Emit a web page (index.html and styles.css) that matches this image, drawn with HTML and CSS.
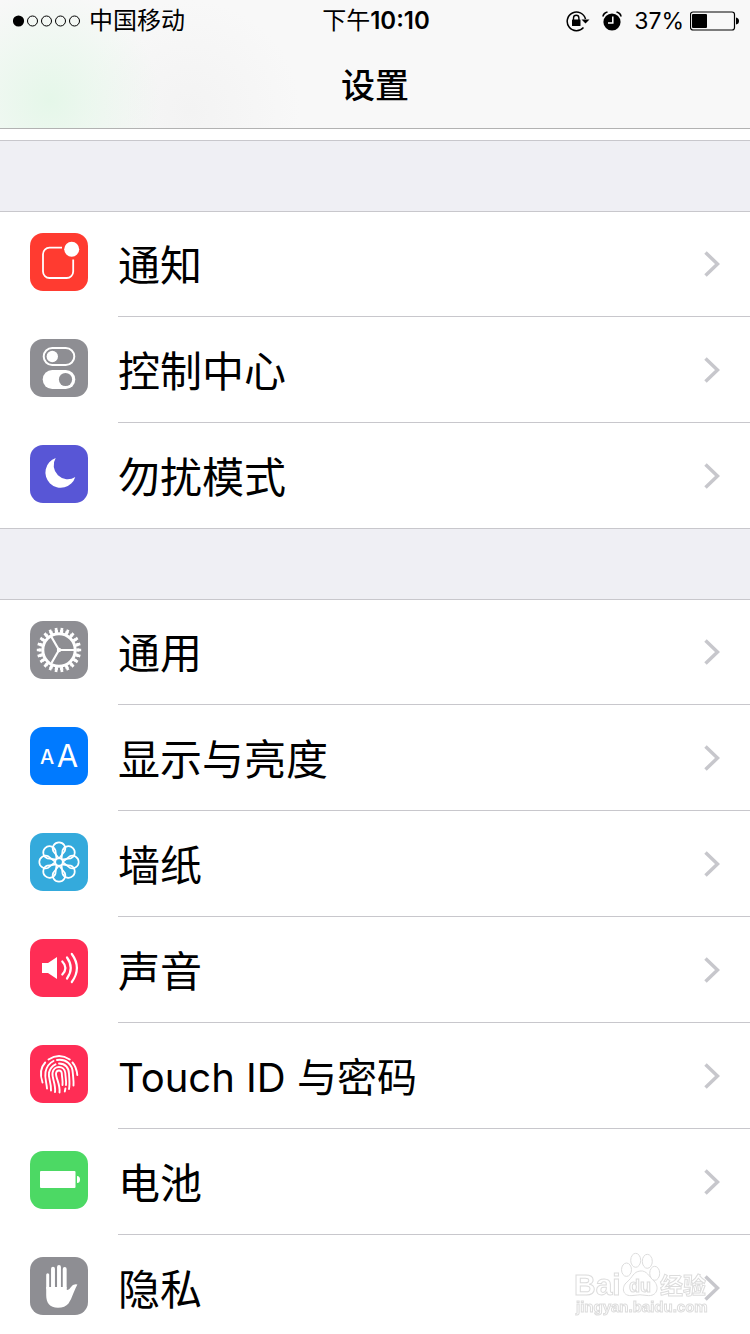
FILE: index.html
```html
<!DOCTYPE html>
<html lang="zh-CN">
<head>
  <meta charset="UTF-8">
  <meta name="viewport" content="width=device-width, initial-scale=1.0">
  <title>设置</title>
  <link rel="stylesheet" href="styles.css">
</head>
<body>

<svg class="defs" width="0" height="0" aria-hidden="true">
  <symbol id="chevron" viewBox="0 0 16 26">
    <path d="M1.500 1.500L13.500 13L1.500 24.500" fill="none" stroke="#c7c7cc" stroke-width="3.500"/>
  </symbol>
  <symbol id="petal" viewBox="0 0 58 58">
    <path d="M29 25.500L23.300 18.300A6.300 6.300 0 1 1 34.700 18.300Z" fill="none" stroke="#fff" stroke-width="1.700" stroke-linejoin="round"/>
  </symbol>
</svg>

<header class="header">
  <!-- Status bar -->
  <div class="status">
    <div class="status-left">
      <svg width="68" height="12" viewBox="0 0 68 12">
        <circle cx="5.500" cy="6" r="5.600"/>
        <g fill="none" stroke="#000">
          <circle cx="19.500" cy="6" r="5"/>
          <circle cx="33.500" cy="6" r="5"/>
          <circle cx="47.500" cy="6" r="5"/>
          <circle cx="61.500" cy="6" r="5"/>
        </g>
      </svg>
      <span>中国移动</span>
    </div>
    <div class="status-time">下午<b>10:10</b></div>
    <div class="status-right">
      <svg width="24" height="22" viewBox="0 0 24 22">
        <path d="M17.500 17.500A9.300 9.300 0 1 1 19.500 9" fill="none" stroke="#000" stroke-width="1.500"/>
        <path d="M15.500 9.500H23.500L19.500 13.500Z"/>
        <rect x="6" y="9.500" width="8.500" height="6.500" rx=".5"/>
        <path d="M7.500 10V8a2.700 2.700 0 0 1 5.400 0V10" fill="none" stroke="#000" stroke-width="1.400"/>
      </svg>
      <svg width="20" height="20" viewBox="0 0 20 20">
        <circle cx="10" cy="11" r="8.600"/>
        <path d="M1 5.500Q1.500 2 5.500 1M19 5.500Q18.500 2 14.500 1" fill="none" stroke="#000" stroke-width="1.700"/>
        <path d="M10.800 5.500V12H6" fill="none" stroke="#fff" stroke-width="1.500"/>
      </svg>
      <span class="percent">37%</span>
      <svg width="49" height="20" viewBox="0 0 49 20">
        <rect x=".5" y="1" width="44" height="18" rx="2.500" fill="none" stroke="#000" stroke-width="1.200"/>
        <rect x="2" y="3" width="15" height="14" rx="1"/>
        <path d="M46 6.500Q49 7 49 10T46 13.500Z"/>
      </svg>
    </div>
  </div>
  <h1>设置</h1>
</header>

<main class="list">

  <nav class="group">
    <a class="row" href="#">
      <svg class="icon red" viewBox="0 0 58 58">
        <path d="M32 14.700H19.500a6.500 6.500 0 0 0-6.500 6.500V38.500a6.500 6.500 0 0 0 6.500 6.500H36.700a6.500 6.500 0 0 0 6.500-6.500V26.500" fill="none" stroke="#fff" stroke-width="1.800"/>
        <circle cx="41.700" cy="16.300" r="7.500" fill="#fff"/>
      </svg>
      <span class="label">通知</span>
      <svg class="chevron"><use href="#chevron"/></svg>
    </a>
    <a class="row" href="#">
      <svg class="icon gray" viewBox="0 0 58 58">
        <rect x="13.700" y="9" width="30.600" height="17" rx="8.500" fill="none" stroke="#fff" stroke-width="2"/>
        <circle cx="22.300" cy="17.500" r="5.700" fill="#fff"/>
        <rect x="12.700" y="31" width="32.600" height="19" rx="9.500" fill="#fff"/>
        <circle cx="35.500" cy="40.500" r="6.600" fill="#8e8e93"/>
      </svg>
      <span class="label">控制中心</span>
      <svg class="chevron"><use href="#chevron"/></svg>
    </a>
    <a class="row" href="#">
      <svg class="icon purple" viewBox="0 0 58 58">
        <path d="M25.700 13A15.300 15.300 0 1 0 45.300 32A14 14 0 0 1 25.700 13Z" fill="#fff"/>
      </svg>
      <span class="label">勿扰模式</span>
      <svg class="chevron"><use href="#chevron"/></svg>
    </a>
  </nav>

  <nav class="group">
    <a class="row" href="#">
      <svg class="icon gray" viewBox="0 0 58 58">
        <g fill="none" stroke="#fff">
          <circle cx="29" cy="29" r="16.200" stroke-width="3"/>
          <circle cx="29" cy="29" r="18.800" stroke-width="3" pathLength="44" stroke-dasharray="1.200 .8" stroke-dashoffset=".6"/>
          <circle cx="29" cy="29" r="21" stroke-width="2.400" pathLength="44" stroke-dasharray=".9 1.100" stroke-dashoffset=".45"/>
          <path d="M29 29H44M29 29L21.500 16M29 29L21.500 42" stroke-width="2.200"/>
        </g>
        <circle cx="29" cy="29" r="2.200" fill="#fff"/>
      </svg>
      <span class="label">通用</span>
      <svg class="chevron"><use href="#chevron"/></svg>
    </a>
    <a class="row" href="#">
      <svg class="icon blue" viewBox="0 0 58 58">
        <text class="small-a" x="17" y="37" text-anchor="middle">A</text>
        <text class="big-a" x="37.500" y="40" text-anchor="middle">A</text>
      </svg>
      <span class="label">显示与亮度</span>
      <svg class="chevron"><use href="#chevron"/></svg>
    </a>
    <a class="row" href="#">
      <svg class="icon cyan" viewBox="0 0 58 58">
        <use href="#petal"/>
        <use href="#petal" transform="rotate(45 29 29)"/>
        <use href="#petal" transform="rotate(90 29 29)"/>
        <use href="#petal" transform="rotate(135 29 29)"/>
        <use href="#petal" transform="rotate(180 29 29)"/>
        <use href="#petal" transform="rotate(225 29 29)"/>
        <use href="#petal" transform="rotate(270 29 29)"/>
        <use href="#petal" transform="rotate(315 29 29)"/>
        <circle cx="29" cy="29" r="3.800" fill="none" stroke="#fff" stroke-width="1.500"/>
      </svg>
      <span class="label">墙纸</span>
      <svg class="chevron"><use href="#chevron"/></svg>
    </a>
    <a class="row" href="#">
      <svg class="icon pink" viewBox="0 0 58 58">
        <path d="M12 24H18L27 18V40L18 34H12Z" fill="#fff"/>
        <path d="M32.300 22.500Q38.500 29 32.300 35.500M37 18.500Q44.500 29 37 39.500M41.800 15Q52 29 41.800 43" fill="none" stroke="#fff" stroke-width="2.200" stroke-linecap="round"/>
      </svg>
      <span class="label">声音</span>
      <svg class="chevron"><use href="#chevron"/></svg>
    </a>
    <a class="row" href="#">
      <svg class="icon pink" viewBox="0 0 58 58">
        <g fill="none" stroke="#fff" stroke-width="1.900" stroke-linecap="round">
          <path d="M18.500 14.500Q29 7.500 39.800 14.500"/>
          <path d="M15.200 17.500C10 23 10 30 12.500 37.500"/>
          <path d="M42.500 17.500Q46.500 22 47.300 30"/>
          <path d="M17 43.500C16.500 37 14.500 33 15.500 27C16.500 22 19.500 18 23.500 16"/>
          <path d="M27 15C36 13.500 42.500 19.500 42.800 28C43.200 33 43.800 36 43.500 40.500"/>
          <path d="M21 45.500C21.500 38 18 33 19 27.500Q20.500 21.500 25.500 19.300"/>
          <path d="M29 18.500C35.500 18.500 39 23 39 29C39.300 35 40 39 39 44"/>
          <path d="M25 47C26 39 21.800 33 22.500 28C23.500 20 34.500 20 35.300 28C35.500 33 36.500 36 36 40"/>
          <path d="M35.400 43.500L34.800 46.500"/>
          <path d="M29.500 47.500C30.500 40 25.800 33 26 28.500C26.500 24.500 31.500 24.500 31.800 28.500C32 33 33 36 32.500 40"/>
        </g>
      </svg>
      <span class="label label-mixed">Touch ID 与密码</span>
      <svg class="chevron"><use href="#chevron"/></svg>
    </a>
    <a class="row" href="#">
      <svg class="icon green" viewBox="0 0 58 58">
        <rect x="10" y="20" width="35.500" height="17" rx="1" fill="#fff"/>
        <path d="M47 25Q50 25 50 28.500T47 32Z" fill="#fff"/>
      </svg>
      <span class="label">电池</span>
      <svg class="chevron"><use href="#chevron"/></svg>
    </a>
    <a class="row" href="#">
      <svg class="icon gray" viewBox="0 0 58 58">
        <path d="M17.700 31V17.700" stroke="#fff" stroke-width="3" stroke-linecap="round"/>
        <path d="M23 31V11.700M29 31V10M34.700 31V12" stroke="#fff" stroke-width="3.900" stroke-linecap="round"/>
        <path d="M16.200 30H36.600V32.500Q38.500 34 41 30Q43 26.500 47.400 27.500Q45.500 31 43.500 36Q41 43 38.500 46.500Q35 50.700 28 50.700C19.500 50.700 16.200 46 16.200 38Z" fill="#fff"/>
      </svg>
      <span class="label">隐私</span>
      <svg class="chevron"><use href="#chevron"/></svg>
    </a>
  </nav>

</main>

<!-- Watermark -->
<svg class="watermark" viewBox="0 0 136 66">
  <text class="wm-name" x="0" y="43">Bai</text>
  <ellipse cx="52.500" cy="17.700" rx="5" ry="6.700"/>
  <ellipse cx="61.700" cy="8.300" rx="5" ry="7"/>
  <ellipse cx="73.300" cy="9.300" rx="5" ry="7"/>
  <ellipse cx="80.700" cy="21.300" rx="5" ry="7"/>
  <path d="M66 19C73 18 75 25 80 29C86 35 83 45 73 43.500Q66 42 59 43.500C48 45 47 35 53 30C59 25 59 20 66 19Z"/>
  <text class="wm-du" x="55" y="40">du</text>
  <text class="wm-cn" x="86" y="42">经验</text>
  <text class="wm-url" x="2" y="60">jingyan.baidu.com</text>
</svg>

</body>
</html>
```
FILE: styles.css
```css
* {
  box-sizing: border-box;
}

body {
  margin: 0;
  height: 100vh;
  display: flex;
  flex-direction: column;
  overflow: hidden;
  font-family: Inter, "Noto Sans CJK SC", sans-serif;
  color: #000;
  background: #efeff4;
}

.defs {
  position: absolute;
}

/* Header */
.header {
  flex: none;
  height: 129px;
  border-bottom: 1px solid #b2b2b2;
  background:
    radial-gradient(circle at 50px 100px, #e5f7e9 0, rgba(229, 247, 233, 0) 110px),
    radial-gradient(circle at 190px 110px, #f3f3f3 0, rgba(243, 243, 243, 0) 110px),
    #f8f8f8;
}

.status {
  display: grid;
  grid-template-columns: 1fr auto 1fr;
  align-items: center;
  height: 42px;
  padding: 0 11px 0 13px;
  font-size: 24px;
  line-height: 42px;
}

.status-left {
  display: flex;
  align-items: center;
  gap: 8px;
}

.status-time b {
  font-weight: 600;
}

.status-right {
  display: flex;
  align-items: center;
  justify-content: flex-end;
  gap: 12px;
}

.percent {
  margin-right: -6px;
  font-size: 23px;
}

h1 {
  margin: 0;
  font-size: 34px;
  font-weight: 500;
  line-height: 88px;
  text-align: center;
}

/* Settings list */
.list {
  flex: 1;
  overflow: hidden;
  padding-top: 12px;
  background: linear-gradient(#fff 11px, #c8c7cc 11px, #c8c7cc 12px, #efeff4 12px);
}

.group {
  margin-top: 70px;
  background: #fff;
  box-shadow: inset 0 1px #c8c7cc;
}

.row {
  position: relative;
  display: flex;
  align-items: center;
  gap: 30px;
  height: 106px;
  padding: 0 30px;
  color: #000;
  text-decoration: none;
}

.row::after {
  content: "";
  position: absolute;
  left: 118px;
  right: 0;
  bottom: 0;
  height: 1px;
  background: #c8c7cc;
}

.row:last-child::after {
  left: 0;
}

.label {
  flex: 1;
  padding-top: 3px;
  font-size: 42px;
  line-height: 60px;
}

.label-mixed {
  font-size: 40px;
}

.chevron {
  width: 16px;
  height: 26px;
}

.icon {
  width: 58px;
  height: 58px;
  margin-bottom: 4px;
  border-radius: 13px;
}

.red { background: #ff3b30; }
.gray { background: #8e8e93; }
.purple { background: #5856d6; }
.blue { background: #007aff; }
.cyan { background: #34aadc; }
.pink { background: #ff2d55; }
.green { background: #4cd964; }

.small-a,
.big-a {
  fill: #fff;
  font-size: 20px;
  font-weight: 500;
}

.big-a {
  font-size: 31px;
  font-weight: 400;
}

/* Watermark */
.watermark {
  position: fixed;
  right: 40px;
  bottom: 16px;
  width: 136px;
  height: 66px;
  fill: #fff;
  stroke: #d4d4d4;
  stroke-width: 1px;
  opacity: 0.8;
  font-family: "Liberation Sans", "Noto Sans CJK SC", sans-serif;
  font-weight: bold;
  pointer-events: none;
}

.wm-name {
  font-size: 30px;
}

.wm-du {
  font-size: 18px;
}

.wm-cn {
  font-size: 23px;
}

.wm-url {
  font-size: 15px;
}
```
